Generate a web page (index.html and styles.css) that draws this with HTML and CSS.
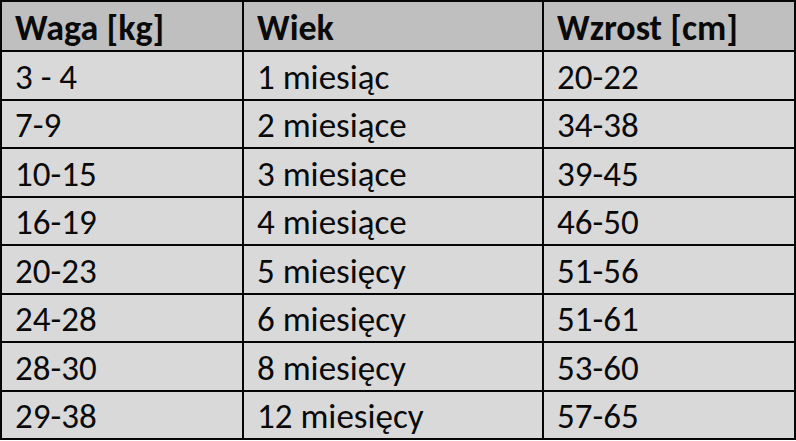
FILE: index.html
```html
<!DOCTYPE html>
<html lang="pl">
<head>
<meta charset="utf-8">
<title>Tabela rozmiarów</title>
<link rel="stylesheet" href="styles.css">
</head>
<body>
<table class="sizes">
  <colgroup>
    <col class="c1"><col class="c2"><col class="c3">
  </colgroup>
  <thead>
    <tr class="head"><th>Waga [kg]</th><th>Wiek</th><th>Wzrost [cm]</th></tr>
  </thead>
  <tbody>
    <tr><td>3 - 4</td><td>1 miesiąc</td><td>20-22</td></tr>
    <tr><td>7-9</td><td>2 miesiące</td><td>34-38</td></tr>
    <tr><td>10-15</td><td>3 miesiące</td><td>39-45</td></tr>
    <tr><td>16-19</td><td>4 miesiące</td><td>46-50</td></tr>
    <tr><td>20-23</td><td>5 miesięcy</td><td>51-56</td></tr>
    <tr><td>24-28</td><td>6 miesięcy</td><td>51-61</td></tr>
    <tr><td>28-30</td><td>8 miesięcy</td><td>53-60</td></tr>
    <tr><td>29-38</td><td>12 miesięcy</td><td>57-65</td></tr>
  </tbody>
</table>
</body>
</html>
```
FILE: styles.css
```css
html, body {
  margin: 0;
  padding: 0;
  background: #ffffff;
}
.sizes {
  border-collapse: collapse;
  table-layout: fixed;
  width: 794px;
  font-family: "Carlito", "Lato", "Liberation Sans", sans-serif;
  color: #0a0a0a;
}
.c1 { width: 242px; }
.c2 { width: 300px; }
.c3 { width: 252px; }
.sizes th, .sizes td {
  border: 2px solid #050505;
  padding: 0 0 4px 13px;
  text-align: left;
  vertical-align: bottom;
  line-height: 1;
  white-space: nowrap;
}
.sizes th {
  height: 44px;
  background: #bfbfbf;
  font-weight: 700;
  font-size: 36px;
}
.sizes td {
  height: 42.5px;
  background: #d9d9d9;
  font-weight: 400;
  font-size: 35px;
}
```
